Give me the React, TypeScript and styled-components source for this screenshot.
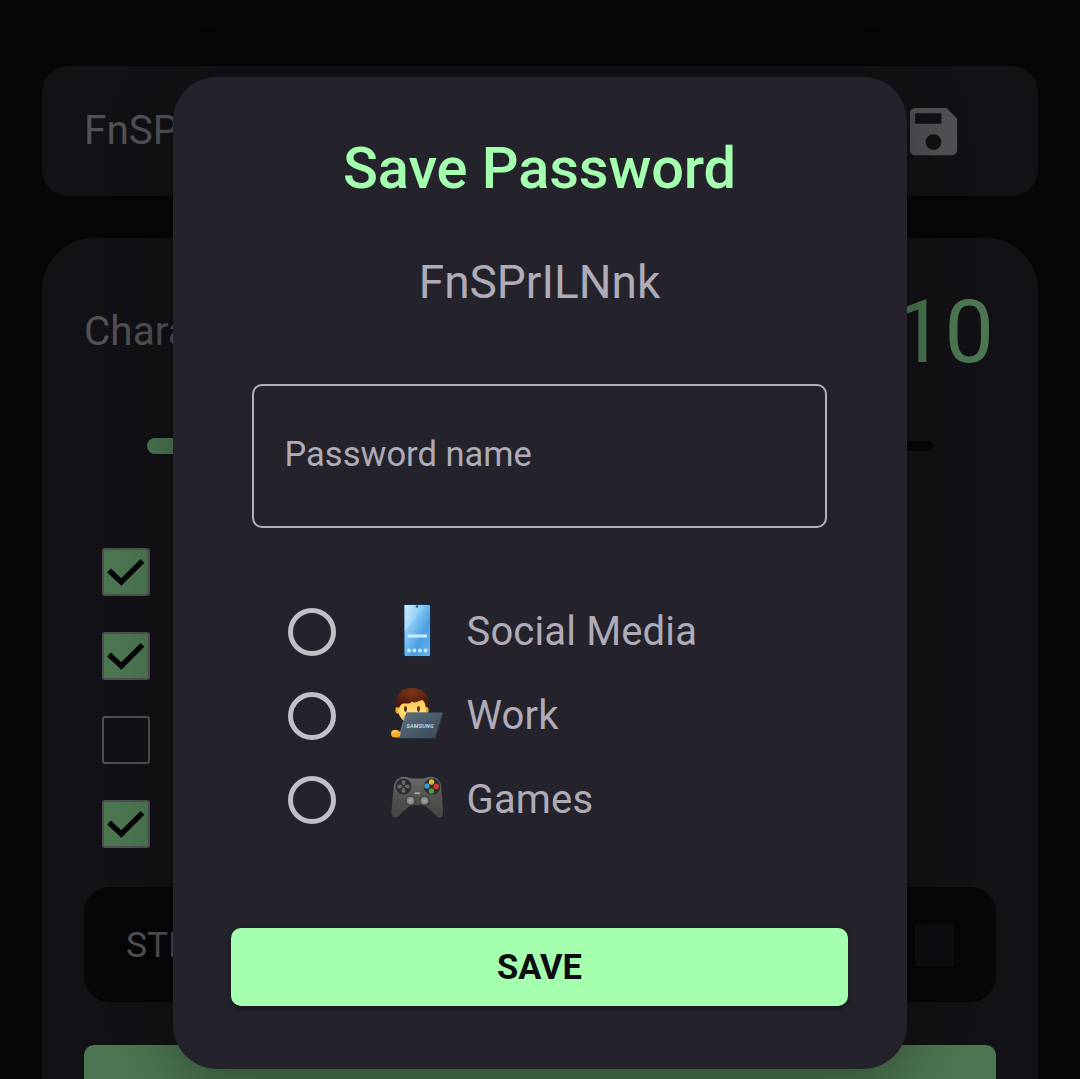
import React from 'react';
import styled, { createGlobalStyle } from 'styled-components';

const color = {
  page: '#060609',
  card: '#121115',
  well: '#060609',
  dialog: '#24232c',
  green: '#a4ffaf',
  greenDim: '#4b7651',
  text: '#afabb8',
  textDim: '#515055',
};

const GlobalStyle = createGlobalStyle`
  * { box-sizing: border-box; }
  body {
    margin: 0;
    background: ${color.page};
    font-family: Roboto, "Liberation Sans", sans-serif;
    overflow: hidden;
  }
`;

const Screen = styled.div`
  position: relative;
  width: 1080px;
  height: 1079px;
  overflow: hidden;
  background: ${color.page};
`;

const Page = styled.main`
  display: flex;
  flex-direction: column;
  gap: 42px;
  height: 100%;
  padding: 66px 42px 0;
  color: ${color.textDim};
`;

const PasswordBar = styled.section`
  display: flex;
  flex: none;
  align-items: center;
  justify-content: space-between;
  height: 130px;
  padding: 0 73.5px 0 42px;
  border-radius: 26px;
  background: ${color.card};
  font-size: 40.5px;
`;

const BarText = styled.span`
  line-height: 50px;
  padding-bottom: 2px;
`;

const SaveGlyph = styled.svg`
  width: 63px;
  height: 63px;
  fill: ${color.textDim};
`;

const Settings = styled.section`
  display: flex;
  flex-direction: column;
  flex: none;
  height: 900px;
  padding: 43px 42px 0;
  border-radius: 52px;
  background: ${color.card};
`;

const LengthRow = styled.div`
  display: flex;
  align-items: center;
  justify-content: space-between;
  height: 100px;
  font-size: 40.5px;
`;

const LengthLabel = styled.span`
  line-height: 50px;
`;

const LengthValue = styled.span`
  padding-right: 2px;
  color: ${color.greenDim};
  font-size: 88px;
`;

const Slider = styled.div`
  display: flex;
  align-items: center;
  height: 16px;
  margin: 57px 63px 0;
`;

const SliderTrack = styled.div<{ $active?: boolean }>`
  flex: 1;
  height: ${(p) => (p.$active ? 16 : 10)}px;
  border-radius: ${(p) => (p.$active ? '8px 0 0 8px' : '0 5px 5px 0')};
  background: ${(p) => (p.$active ? color.greenDim : color.well)};
`;

const CheckList = styled.div`
  display: flex;
  flex-direction: column;
  gap: 36px;
  margin: 94px 0 0 18px;
`;

const CheckBox = styled.span<{ $on: boolean }>`
  width: 48px;
  height: 48px;
  border: 2px solid #4f4e53;
  border-radius: 3px;
  background: ${(p) => (p.$on ? color.greenDim : 'transparent')};
`;

const CheckMark = styled.svg`
  display: block;
  width: 44px;
  height: 44px;
  fill: none;
  stroke: #060609;
  stroke-width: 5.4;
`;

const Strength = styled.div`
  display: flex;
  align-items: center;
  justify-content: space-between;
  flex: none;
  height: 115px;
  margin-top: 39px;
  padding: 0 42px;
  border-radius: 26px;
  background: ${color.well};
  font-size: 35.5px;
`;

const StrengthBar = styled.span`
  width: 39px;
  height: 42px;
  background: #0e0d12;
`;

const Generate = styled.div`
  flex: none;
  height: 80px;
  margin-top: 42.5px;
  border-radius: 10px;
  background: ${color.greenDim};
`;

const Overlay = styled.div`
  position: absolute;
  inset: 0;
  display: flex;
  align-items: flex-start;
  justify-content: center;
  padding-top: 77px;
`;

const Dialog = styled.div`
  display: flex;
  flex-direction: column;
  width: 734px;
  height: 992px;
  padding: 53px 59px 63px 58px;
  border-radius: 44px;
  background: ${color.dialog};
  box-shadow: 0 14px 60px rgba(0, 0, 0, 0.35);
  color: ${color.text};
`;

const Title = styled.h1`
  margin: 0;
  color: ${color.green};
  font-size: 57.75px;
  font-weight: 500;
  line-height: 76px;
  letter-spacing: -0.1px;
  text-align: center;
`;

const Password = styled.p`
  margin: 46px 0 0;
  font-size: 46px;
  line-height: 60px;
  text-align: center;
`;

const Field = styled.div`
  display: flex;
  align-items: center;
  height: 144px;
  margin: 72px 21px 0;
  padding: 0 0 4px 30.5px;
  border: 2px solid #b3b0bb;
  border-radius: 10px;
  font-size: 34.5px;
`;

const Options = styled.div`
  margin-top: 61.5px;
  padding-left: 57px;
`;

const Option = styled.div`
  display: flex;
  align-items: center;
  height: 84px;
  font-size: 40px;
  line-height: 50px;
`;

const Radio = styled.span`
  width: 48px;
  height: 48px;
  margin-right: 54px;
  border: 5px solid #c0bfc4;
  border-radius: 50%;
`;

const Emoji = styled.svg`
  width: 54px;
  height: 54px;
  margin: -4px 22.5px 0 0;
`;

const OptionLabel = styled.span`
  letter-spacing: 0.15px;
`;

const SaveButton = styled.button`
  height: 78px;
  margin-top: auto;
  padding: 0;
  border: 0;
  border-radius: 10px;
  background: ${color.green};
  box-shadow: 0 3px 5px rgba(0, 0, 0, 0.4);
  color: #0d0d12;
  font: 700 34.5px Roboto, sans-serif;
`;

const Phone = () => (
  <Emoji viewBox="0 0 54 54">
    <defs>
      <linearGradient id="screen" x1="0" y1="0" x2="1" y2="1">
        <stop offset="0" stopColor="#c4eafb" />
        <stop offset=".3" stopColor="#8ccdf6" />
        <stop offset=".65" stopColor="#4d9fe3" />
        <stop offset="1" stopColor="#67b4ee" />
      </linearGradient>
      <linearGradient id="glare" x1="0" y1="0" x2="1" y2="0">
        <stop offset="0" stopColor="#dcf5fd" stopOpacity=".35" />
        <stop offset="1" stopColor="#a9dbfa" stopOpacity=".1" />
      </linearGradient>
    </defs>
    <rect x="13.5" y="1" width="27" height="52.5" rx="2" fill="#17324f" />
    <rect x="14.5" y="2" width="25.5" height="51" rx="1.2" fill="url(#screen)" />
    <path d="M14.5 2h22L14.5 28z" fill="url(#glare)" />
    <circle cx="27" cy="3.4" r="1.2" fill="#27527b" />
    <rect x="17.5" y="31.5" width="19.5" height="3" fill="#c9ecff" />
    {[18.9, 24.4, 30, 35.5].map((x) => (
      <circle key={x} cx={x} cy="47.5" r="1.9" fill="#c4e9ff" />
    ))}
  </Emoji>
);

const Worker = () => (
  <Emoji viewBox="0 0 54 54">
    <defs>
      <linearGradient id="face" x1="0" y1="0" x2="0" y2="1">
        <stop offset="0" stopColor="#f9c94a" />
        <stop offset=".6" stopColor="#ffdf7c" />
        <stop offset="1" stopColor="#f5b82e" />
      </linearGradient>
      <linearGradient id="lid" x1="0" y1="0" x2="1" y2="1">
        <stop offset="0" stopColor="#5f7080" />
        <stop offset=".5" stopColor="#4a5b6a" />
        <stop offset="1" stopColor="#394856" />
      </linearGradient>
      <radialGradient id="hair" cx=".5" cy=".2" r=".7">
        <stop offset="0" stopColor="#7d3719" />
        <stop offset="1" stopColor="#4c1a0b" />
      </radialGradient>
    </defs>
    <ellipse cx="8" cy="23" rx="2.600" ry="3.800" fill="#e9ad2b" />
    <ellipse cx="36" cy="23" rx="2.600" ry="3.800" fill="#e9ad2b" />
    <path d="M8.500 12h27.500v11c0 9-6 13-13.500 13S8.500 32 8.500 23z" fill="url(#face)" />
    <path
      d="M6.500 20.500C4.500 8 11 1 22 1c12 0 18.500 7 16 19.500l-2.500-.5c0-3-1-5-3-7-4 1-6 2.500-9 2.500l-1.500-1-2 1.700c-4 .8-6-.2-8 .8-1.500 1-2 2-2.500 3.500z"
      fill="url(#hair)"
    />
    <ellipse cx="15.500" cy="22" rx="1.500" ry="2.900" fill="#55270f" />
    <ellipse cx="28.500" cy="22" rx="1.500" ry="2.900" fill="#55270f" />
    <path d="M16.500 25.800H53q1.200 0 .8 1.700L46.500 50q-.5 2-2.500 2H8z" fill="#26313d" />
    <path d="M16.500 25.500h35q1.200 0 .8 1.400L45.500 49.500q-.5 1.500-2 1.500H8.500z" fill="url(#lid)" />
    <path d="m15.500 27.500-6.500 23" stroke="#8494ac" strokeWidth="1" opacity=".7" />
    <text
      x="16.500"
      y="40.800"
      fill="#ccd3da"
      fontFamily="Roboto, sans-serif"
      fontSize="5.400"
      fontWeight="700"
      fontStyle="italic"
      textLength="27"
    >
      SAMSUNG
    </text>
    <path d="M1 47q0-4.500 4.500-4.200 5 .3 5 4.200-.5 3.500-4.800 3.500Q1 50.500 1 47z" fill="#f3ae2e" />
    <path d="M2.500 46q1-2.300 4-1.800" fill="none" stroke="#ffd86b" strokeWidth="1.200" />
  </Emoji>
);

const Gamepad = () => (
  <Emoji viewBox="0 0 54 54">
    <defs>
      <linearGradient id="pad" x1="0" y1="0" x2="0" y2="1">
        <stop offset="0" stopColor="#6c6c69" />
        <stop offset=".5" stopColor="#525250" />
        <stop offset="1" stopColor="#454542" />
      </linearGradient>
      <radialGradient id="stick">
        <stop offset="0" stopColor="#a9a9a8" />
        <stop offset="1" stopColor="#7c7c7a" />
      </radialGradient>
    </defs>
    <g transform="translate(0.500 1)">
      <path
        d="M11 5q5-1 9 1.500h14q4-2.500 9-1.500 6 2 7.500 8l2 25q.5 7.500-3 7.500-3 0-5.500-3.500L33.500 33h-13L10 42q-2.500 3.500-5.500 3.500-4-.5-3.500-7.500l2.500-25q1.500-6 7.500-8z"
        fill="url(#pad)"
      />
      <circle cx="13" cy="14.500" r="8" fill="#2e2e2e" />
      <path
        d="M11.200 8.500h3.600v4.200h4.200v3.600h-4.200v4.200h-3.600v-4.200H7v-3.600h4.200z"
        fill="#686866"
      />
      <path d="m9 10.500 8 8m0-8-8 8" stroke="#2e2e2e" strokeWidth="1.300" />
      <circle cx="41.500" cy="14.500" r="8.300" fill="#2e2e2e" />
      <circle cx="41" cy="10" r="2.700" fill="#e8b92f" />
      <circle cx="45.700" cy="14.500" r="2.700" fill="#d93b37" />
      <circle cx="36.500" cy="14" r="2.700" fill="#3896dd" />
      <circle cx="41" cy="19" r="2.700" fill="#48a341" />
      <rect x="24" y="20.300" width="5.500" height="2" rx="1" fill="#a2a2a2" />
      <circle cx="20" cy="29" r="5.200" fill="#3f3f3e" />
      <circle cx="34" cy="29" r="5.200" fill="#3f3f3e" />
      <circle cx="20" cy="28.600" r="3.900" fill="url(#stick)" />
      <circle cx="34" cy="28.600" r="3.900" fill="url(#stick)" />
    </g>
  </Emoji>
);

const categories = [
  { label: 'Social Media', Icon: Phone },
  { label: 'Work', Icon: Worker },
  { label: 'Games', Icon: Gamepad },
];

const checks = [true, true, false, true];

export default function App() {
  return (
    <Screen>
      <GlobalStyle />
      <Page>
        <PasswordBar>
          <BarText>FnSPrILNnk</BarText>
          <SaveGlyph viewBox="0 0 24 24">
            <path d="M17 3H5c-1.110 0-2 .9-2 2v14c0 1.100.89 2 2 2h14c1.100 0 2-.9 2-2V7l-4-4zm-5 16c-1.660 0-3-1.340-3-3s1.340-3 3-3 3 1.340 3 3-1.340 3-3 3zm3-10H5V5h10v4z" />
          </SaveGlyph>
        </PasswordBar>
        <Settings>
          <LengthRow>
            <LengthLabel>Character Length</LengthLabel>
            <LengthValue>10</LengthValue>
          </LengthRow>
          <Slider>
            <SliderTrack $active />
            <SliderTrack />
          </Slider>
          <CheckList>
            {checks.map((on, i) => (
              <CheckBox key={i} $on={on}>
                {on && (
                  <CheckMark viewBox="0 0 44 44">
                    <path d="M5 20.500 17.300 32 38.500 10.800" />
                  </CheckMark>
                )}
              </CheckBox>
            ))}
          </CheckList>
          <Strength>
            <span>STRENGTH</span>
            <StrengthBar />
          </Strength>
          <Generate />
        </Settings>
      </Page>
      <Overlay>
        <Dialog role="dialog">
          <Title>Save Password</Title>
          <Password>FnSPrILNnk</Password>
          <Field>Password name</Field>
          <Options role="radiogroup">
            {categories.map(({ label, Icon }) => (
              <Option key={label}>
                <Radio role="radio" />
                <Icon />
                <OptionLabel>{label}</OptionLabel>
              </Option>
            ))}
          </Options>
          <SaveButton>SAVE</SaveButton>
        </Dialog>
      </Overlay>
    </Screen>
  );
}
